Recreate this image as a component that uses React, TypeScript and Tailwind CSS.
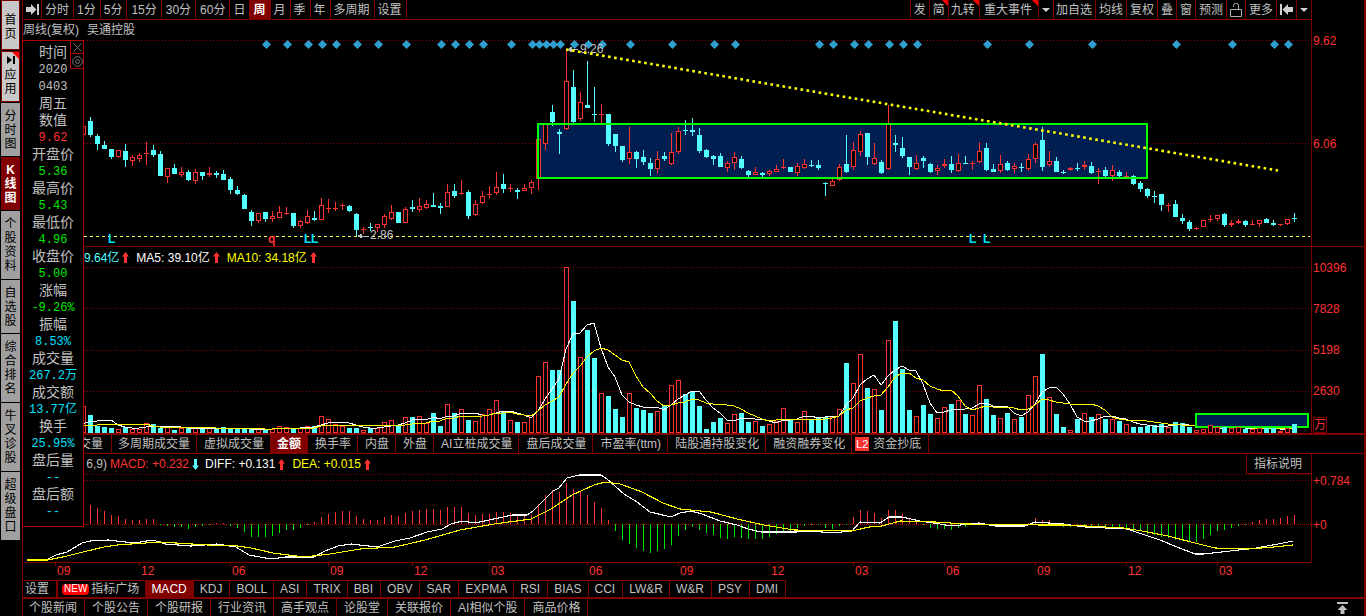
import type { ReactNode } from "react";

const RED = "#ff3232";
const CYAN = "#54ffff";
const MAROON = "#800000";

const STEP = 7;
const X0 = 83;

// Each entry: direction (r = up, c = down), high, body top, body bottom, low
const CANDLES = `r126,126,135,135 c117,121,135,137 c134,136,144,150 c141,145,149,149 c149,149,157,159 r150,150,157,158
c144,151,160,167 r155,157,161,166 r153,155,159,162 r142,153,154,165 c145,150,155,157 c151,154,176,176 r168,168,177,183
c164,168,174,174 r167,172,175,177 c170,172,180,181 r169,172,181,184 c172,172,176,180 r167,173,175,177 c171,173,175,178
c170,174,180,180 c177,179,190,194 c186,190,194,195 c194,195,209,209 c210,212,221,226 r213,213,221,223 c212,212,219,222
r211,216,219,222 r206,212,218,218 r207,213,214,215 c213,213,226,228 r220,221,226,228 r210,216,223,224 c211,218,220,221
r198,205,220,220 r199,208,209,213 r202,208,209,211 r203,205,206,210 c205,206,211,212 c213,214,230,236 r227,229,230,234
c223,227,228,231 r224,224,228,232 r214,216,225,228 r205,212,219,220 c212,212,223,223 r207,209,223,223 c200,207,209,212
r198,206,210,212 r200,204,208,209 c193,205,207,207 c203,206,208,214 r184,192,207,207 c184,191,196,198 r180,193,194,195
c190,192,216,219 r200,204,215,216 r191,196,203,204 r186,194,195,198 r172,187,193,195 c174,184,189,193 r184,188,189,192
c188,190,192,199 r184,188,191,191 r180,182,188,194 r139,139,179,190 r124,124,144,150 c105,112,122,126 c129,132,134,154
r50,81,129,130 c70,87,122,123 r92,102,119,121 c61,105,108,108 c87,114,115,122 r104,114,115,123 c114,114,144,146
c134,134,146,152 c146,146,160,162 r127,152,159,164 c151,152,159,168 c150,157,162,165 c158,163,169,176 r151,159,169,173
c152,156,159,161 r133,152,164,165 r127,131,152,154 c120,130,131,135 c118,130,132,136 c128,135,151,153 c149,150,157,158
c155,156,159,165 c153,156,167,167 r161,163,168,172 r152,157,163,170 c156,159,168,169 c170,171,175,177 r167,172,175,175
c172,173,175,177 r170,171,174,176 r165,169,172,172 r159,167,168,169 c167,167,172,172 r163,166,173,176 r159,164,168,169
c160,165,166,167 c160,165,168,170 c182,183,184,196 r179,181,186,186 r164,167,180,181 c135,164,172,173 r142,150,167,170
r131,134,152,156 c133,133,157,165 r143,158,164,165 c160,162,173,174 r105,124,169,170 c135,143,145,152 c137,148,156,158
c157,157,167,175 r155,163,169,170 c156,158,161,168 c163,164,172,173 r165,168,171,175 r159,164,166,168 c156,164,170,173
r154,163,171,172 c156,163,164,164 r161,163,164,170 r142,151,162,163 c143,148,170,171 c164,169,172,172 r155,164,171,173
c161,163,170,171 r163,166,169,173 c163,167,168,172 r154,159,169,171 r142,144,159,163 c127,140,167,171 r151,161,165,167
c157,161,172,172 c170,172,173,174 r167,168,170,171 c163,168,169,171 r161,165,167,170 c162,166,173,174 r168,171,172,184
c167,170,176,177 r165,170,176,181 c170,172,176,177 r172,176,177,178 c175,176,184,185 c181,183,189,192 c188,189,196,198
c191,196,197,203 c194,194,205,211 r203,205,206,212 c200,204,217,217 c214,218,221,224 c220,222,229,231 r227,228,229,230
r220,220,227,227 r215,219,220,222 r215,215,219,221 c213,214,225,227 r220,223,225,227 r219,221,223,224 c220,221,225,227
r220,224,225,225 r220,220,224,227 c218,219,223,223 c220,223,225,226 r224,224,225,226 r219,219,224,225 c213,218,219,222`
  .split(/\s+/)
  .map((s) => ({ up: s[0] === "r", v: s.slice(1).split(",").map(Number) }));

const VOL_BASE = 433;
const VOLUME = [
  406, 415, 426, 427, 428, 429, 427, 429, 429, 423, 424, 428, 427, 430, 428, 428, 428, 429, 427, 428, 427, 429, 429, 429,
  429, 429, 429, 429, 426, 427, 428, 428, 426, 426, 416, 419, 424, 426, 428, 428, 430, 428, 428, 422, 420, 426, 417, 417, 416,
  423, 413, 426, 404, 413, 409, 420, 421, 414, 409, 400, 412, 420, 422, 422, 415, 376, 362, 370, 370, 267, 301, 357, 330,
  358, 393, 396, 409, 417, 393, 408, 410, 413, 411, 406, 385, 380, 394, 391, 406, 429, 422, 418, 423, 414, 413, 422, 421,
  426, 424, 421, 408, 420, 422, 411, 419, 418, 417, 417, 409, 363, 383, 354, 388, 389, 410, 340, 321, 369, 410, 416, 405,
  414, 418, 407, 404, 400, 414, 415, 385, 399, 415, 418, 413, 419, 417, 395, 376, 354, 397, 414, 427, 430, 419, 413, 417,
  414, 419, 419, 421, 424, 427, 427, 426, 425, 424, 427, 422, 423, 427, 430, 429, 425, 427, 427, 428, 427, 429, 429, 428,
  428, 428, 431, 428, 424,
];
// The mark over the volume bars begins at this bar
const LATE = VOLUME.length - 14;
const EARLIER = [4, 4, 4, 4, 4, 5, 5, 5, 5];

function average(n: number) {
  const h = [...EARLIER, ...VOLUME.map((y) => VOL_BASE - y)];
  return VOLUME.map((_, i) => {
    const end = i + EARLIER.length + 1;
    const sum = h.slice(end - n, end).reduce((a, b) => a + b, 0);
    return `${X0 + STEP * i},${Math.round(VOL_BASE - sum / n)}`;
  }).join(" ");
}

const MACD_BARS = [
  505, 508, 511, 515, 516, 519, 520, 520, 519, 519, 525, 526, 527, 527, 529, 527, 526, 525, 523, 523, 526, 528, 532, 537,
  537, 537, 536, 533, 530, 530, 528, 525, 522, 517, 514, 512, 511, 511, 516, 519, 520, 520, 517, 515, 516, 513, 511, 510, 509,
  509, 510, 507, 507, 507, 513, 515, 514, 514, 512, 512, 513, 514, 515, 515, 504, 495, 490, 492, 483, 489, 491, 495, 502,
  508, 520, 531, 540, 544, 548, 551, 553, 551, 549, 545, 536, 530, 527, 530, 533, 535, 538, 539, 537, 538, 539, 539, 539,
  537, 534, 531, 531, 528, 526, 525, 525, 528, 529, 526, 525, 517, 510, 511, 513, 518, 510, 510, 514, 519, 521, 525, 528,
  529, 529, 530, 528, 527, 525, 522, 525, 526, 525, 526, 525, 525, 523, 518, 520, 520, 523, 527, 527, 526, 527, 527, 528,
  527, 528, 529, 529, 531, 531, 534, 535, 537, 538, 540, 541, 542, 542, 539, 535, 531, 530, 528, 526, 525, 522, 520, 519,
  519, 518, 516, 515,
];

const DIFF =
  "27,560 35,561 48,559 56,555 67,552 82,543 90,541 108,540 134,543 153,540 165,544 191,546 217,544 236,547 249,555 271,559 286,557 314,557 325,551 338,546 351,544 377,547 395,541 410,538 427,532 442,529 451,524 462,521 475,523 503,517 512,515 527,515 533,511 553,491 559,488 567,478 579,475 601,475 607,479 624,494 637,502 650,512 671,517 680,513 691,511 702,514 720,521 737,525 748,529 761,532 796,532 812,531 832,533 852,531 860,522 880,523 889,517 902,517 920,521 940,524 951,526 979,523 995,526 1025,526 1035,522 1063,524 1085,527 1127,529 1142,534 1160,540 1177,547 1195,554 1204,554 1230,551 1256,548 1278,544 1293,541";
const DEA =
  "27,560 48,560 67,556 87,551 104,547 117,545 160,542 208,545 238,546 251,548 273,553 304,557 330,554 360,549 395,547 425,540 460,530 494,524 531,519 551,509 572,495 594,485 605,482 620,484 642,492 663,503 680,509 711,512 737,519 764,525 794,530 852,531 869,527 882,526 900,521 935,522 966,524 1041,525 1067,525 1124,528 1142,531 1168,536 1195,543 1215,548 1248,549 1274,547 1293,545";

const DIAMONDS = [
  266, 287, 308, 322, 336, 357, 378, 406, 441, 455, 469, 483, 511, 532, 539, 546, 553, 560, 574, 588, 602, 630, 672, 714,
  735, 819, 833, 854, 868, 889, 903, 917, 987, 1029, 1092, 1176, 1232, 1274, 1288,
];

const MONTHS: [number, string][] = [
  [55, "09"], [139, "12"], [230, "06"], [328, "09"], [412, "12"], [489, "03"], [587, "06"], [678, "09"], [769, "12"],
  [853, "03"], [944, "06"], [1035, "09"], [1126, "12"], [1217, "03"],
];

const PERIODS = ["分时", "1分", "5分", "15分", "30分", "60分", "日", "周", "月", "季", "年", "多周期", "设置"];
const VOL_TABS = ["多周期成交量", "虚拟成交量", "金额", "换手率", "内盘", "外盘", "AI立桩成交量", "盘后成交量", "市盈率(ttm)", "陆股通持股变化", "融资融券变化"];
const INDICATORS = ["MACD", "KDJ", "BOLL", "ASI", "TRIX", "BBI", "OBV", "SAR", "EXPMA", "RSI", "BIAS", "CCI", "LW&R", "W&R", "PSY", "DMI"];
const NEWS = ["个股新闻", "个股公告", "个股研报", "行业资讯", "高手观点", "论股堂", "关联报价", "AI相似个股", "商品价格"];

const G = "text-[#00e600]";
const C = "text-[#00e0ff]";
const READOUT: [string, string][] = [
  ["开盘价", "5.36"], ["最高价", "5.43"], ["最低价", "4.96"], ["收盘价", "5.00"], ["涨幅", "-9.26%"],
  ["振幅", "8.53%"], ["成交量", "267.2万"], ["成交额", "13.77亿"], ["换手", "25.95%"], ["盘后量", "--"], ["盘后额", "--"],
];

function Dotted({ y }: { y: number }) {
  return <line x1={84} x2={1311} y1={y + 0.5} y2={y + 0.5} stroke="#900000" strokeDasharray="1 2" />;
}

function Bar({ i }: { i: number }) {
  const y = VOLUME[i];
  const x = X0 + STEP * i - 2;
  return CANDLES[i].up ? (
    <rect x={x + 0.5} y={y + 0.5} width={4} height={Math.max(1, VOL_BASE - y - 1)} fill="black" stroke={RED} />
  ) : (
    <rect x={x} y={y} width={5} height={VOL_BASE - y} fill={CYAN} />
  );
}

function PriceChart() {
  return (
    <svg viewBox="23 40 1288 206" preserveAspectRatio="none" className="block h-[206px] w-full" shapeRendering="crispEdges">
      <Dotted y={40} />
      <Dotted y={143} />
      <line x1={84} x2={1310} y1={236.5} y2={236.5} stroke="#ffff54" strokeDasharray="3 3" />
      <rect x={538} y={124} width={609} height={54} fill="#001e50" />
      {DIAMONDS.map((x) => (
        <path key={x} d={`M${x + 0.5} 40l4.5 4.5l-4.5 4.5l-4.5 -4.5z`} fill="#2f9fd0" shapeRendering="auto" />
      ))}
      {CANDLES.map(({ up, v: [high, top, bottom, low] }, i) => {
        const x = X0 + STEP * i;
        const color = up ? RED : CYAN;
        const hollow = up && bottom - top > 2;
        return (
          <g key={i}>
            <rect x={x} y={high} width={1} height={low - high} fill={color} />
            {hollow ? (
              <rect x={x - 1.5} y={top + 0.5} width={4} height={bottom - top - 1} fill="black" stroke={color} />
            ) : (
              <rect x={x - 2} y={top} width={5} height={bottom - top} fill={color} />
            )}
          </g>
        );
      })}
      <rect x={538} y={124} width={609} height={54} fill="none" stroke="#00ff00" strokeWidth={2} />
      <g fill="#c0c0c0" fontFamily="Liberation Sans, sans-serif" fontSize={12}>
        <path d="M567 49.5l5 -3v2.5h6v1h-6v2.5z" />
        <text x={580} y={53}>9.26</text>
        <path d="M357 236l5 -2.500v2h7v1h-7v2z" />
        <text x={370} y={239}>2.86</text>
      </g>
      <line
        x1={566}
        y1={49.5}
        x2={1278}
        y2={170.5}
        stroke="#ffff00"
        strokeWidth={2.600}
        strokeDasharray="2.6 3.5"
        shapeRendering="auto"
      />
      <g fill="#00e0ff" fontFamily="Liberation Sans, sans-serif" fontSize={12} fontWeight={700}>
        {[108, 304, 311, 969, 983].map((x) => (
          <text key={x} x={x} y={243}>L</text>
        ))}
        <text x={268} y={243} fill={RED}>q</text>
      </g>
    </svg>
  );
}

function VolumeChart() {
  return (
    <svg viewBox="23 266 1288 167" preserveAspectRatio="none" className="block h-[167px] w-full" shapeRendering="crispEdges">
      {[267, 308, 350, 391].map((y) => (
        <Dotted key={y} y={y} />
      ))}
      {VOLUME.slice(0, LATE + 1).map((_, i) => (
        <Bar key={i} i={i} />
      ))}
      <g fill="none">
        <polyline points={average(5)} stroke="white" />
        <polyline points={average(10)} stroke="#ffff00" />
      </g>
      <rect x={1196} y={414} width={112} height={13} fill="#001e50" stroke="#00ff00" strokeWidth={2} />
      {VOLUME.slice(LATE + 1).map((_, i) => (
        <Bar key={i} i={i + LATE + 1} />
      ))}
    </svg>
  );
}

function MacdChart() {
  return (
    <svg viewBox="23 474 1288 88" preserveAspectRatio="none" className="block h-[88px] w-full" shapeRendering="crispEdges">
      <Dotted y={474} />
      <Dotted y={480} />
      <line x1={84} x2={1311} y1={524.5} y2={524.5} stroke="#b00000" strokeDasharray="1 1" />
      {MACD_BARS.map((y, i) => (
        <rect
          key={i}
          x={90 + STEP * i}
          y={Math.min(y, 524)}
          width={1}
          height={Math.max(1, Math.abs(524 - y))}
          fill={y < 524 ? RED : "#00e600"}
        />
      ))}
      <g fill="none">
        <polyline points={DIFF} stroke="white" strokeWidth={1.100} />
        <polyline points={DEA} stroke="#ffff00" strokeWidth={1.100} />
      </g>
    </svg>
  );
}

function MonthAxis() {
  return (
    <svg viewBox="23 562 1288 18" preserveAspectRatio="none" className="block h-[18px] w-full">
      <rect x={23} y={562} width={1288} height={1} fill={MAROON} />
      {MONTHS.map(([x, label]) => (
        <g key={x}>
          <rect x={x} y={562} width={1} height={4} fill={MAROON} />
          <text x={x + 2} y={575} fill={RED} fontSize={12} fontFamily="Liberation Sans, sans-serif">{label}</text>
        </g>
      ))}
    </svg>
  );
}

function Trend({ down = false }: { down?: boolean }) {
  return (
    <svg viewBox="0 0 7 11" className={down ? "ml-[3px] mr-1.5 h-[11px] w-[7px] rotate-180" : "ml-[3px] mr-[7px] h-[11px] w-[7px]"} aria-hidden="true">
      <path d="M3.5 0L7 4.500H5V11H2V4.500H0z" fill={down ? CYAN : RED} />
    </svg>
  );
}

function Tool({ children, flag = false, pad = "px-[3px]" }: { children: ReactNode; flag?: boolean; pad?: string }) {
  return (
    <button type="button" className={`relative flex h-full items-center border-l border-[#800000] ${pad}`}>
      {children}
      {flag && <span className="absolute right-0 top-0 size-1.5 bg-[#ff0000] [clip-path:polygon(0_0,100%_0,100%_100%)]" />}
    </button>
  );
}

function Caret() {
  return (
    <svg viewBox="0 0 8 4" className="h-1 w-2" aria-hidden="true">
      <path d="M0 0h8l-4 4z" fill="#d0d0d0" />
    </svg>
  );
}

function StepArrow({ flip = false }: { flip?: boolean }) {
  return (
    <svg viewBox="0 0 13 11" className={flip ? "h-[11px] w-[13px] rotate-180" : "h-[11px] w-[13px]"} aria-hidden="true">
      <path d="M0 3h5V0l5.500 5.500L5 11V8H0zM11 0h2v11h-2z" fill="#d0d0d0" />
    </svg>
  );
}

function SideTab({ label, tone, children }: { label: string; tone: string; children?: ReactNode }) {
  return (
    <button type="button" className={`relative flex w-full flex-col items-center justify-center ${tone}`}>
      {children}
      <span className="w-3 break-all text-center leading-[14px]">{label}</span>
    </button>
  );
}

const AXIS = "w-[52px] shrink-0 pl-px text-[#ff3232]";
const PLOT = "min-w-0 flex-1 border-r border-[#800000]";
const VALUE = "h-[17px] whitespace-nowrap font-['Liberation_Mono','Noto_Sans_CJK_SC',monospace] text-[12px] leading-[19px]";

export default function App() {
  return (
    <div className="bg-white pr-1 font-['Liberation_Sans','Noto_Sans_CJK_SC',sans-serif] text-[12px] leading-4 text-[#c0c0c0]">
      <div className="flex overflow-hidden border-r-2 border-[#800000] bg-black">
        <nav className="flex w-[22px] shrink-0 flex-col gap-px pl-px pr-0.5 text-black">
          <SideTab label="首页" tone="h-[50px] border border-[#800000] bg-[#c8c8c8] pt-1" />
          <SideTab label="应用" tone="h-[51px] border border-[#800000] bg-[#c8c8c8] pb-0.5">
            <svg viewBox="0 0 8 8" className="mb-1 h-2 w-2" aria-hidden="true">
              <path d="M0 0l5 4l-5 4zM6 0h2v8H6z" fill="black" />
            </svg>
            <span className="absolute right-0 top-0 size-[7px] bg-[#ff0000] [clip-path:polygon(0_0,100%_0,100%_100%)]" />
          </SideTab>
          <SideTab label="分时图" tone="h-[53px] bg-[#a0a0a0]" />
          <SideTab label="K线图" tone="h-[53px] bg-[#800000] font-bold text-white" />
          <SideTab label="个股资料" tone="h-[68px] bg-[#a0a0a0]" />
          <SideTab label="自选股" tone="h-[53px] bg-[#a0a0a0]" />
          <SideTab label="综合排名" tone="h-[68px] bg-[#a0a0a0]" />
          <SideTab label="牛叉诊股" tone="h-[68px] bg-[#a0a0a0]" />
          <SideTab label="超级盘口" tone="h-[68px] bg-[#a0a0a0]" />
        </nav>

        <main className="relative min-w-0 flex-1 border-l border-[#800000]">
          <section className="flex border-b border-[#800000]">
            <div className={PLOT}>
              <div className="flex h-5 justify-between border-b border-[#800000]">
                <div className="flex">
                  <button type="button" aria-label="下一步" className="flex w-[18px] items-center justify-center">
                    <StepArrow />
                  </button>
                  {PERIODS.map((p) => (
                    <button
                      key={p}
                      type="button"
                      className={
                        p === "周"
                          ? "border-l border-[#800000] bg-[#800000] pl-[3px] pr-1 font-bold text-white"
                          : p.length === 3 && p !== "多周期"
                            ? "border-l border-[#800000] px-1"
                            : "border-l border-[#800000] pl-[3px] pr-1"
                      }
                    >
                      {p}
                    </button>
                  ))}
                  <span className="border-l border-[#800000]" />
                </div>
                <div className="flex">
                  <Tool>发</Tool>
                  <Tool flag>简</Tool>
                  <Tool flag pad="pl-0.5 pr-1">九转</Tool>
                  <Tool flag pad="pl-1 pr-1.5">重大事件</Tool>
                  <Tool><Caret /></Tool>
                  <Tool pad="pl-0.5 pr-[3px]">加自选</Tool>
                  <Tool>均线</Tool>
                  <Tool>复权</Tool>
                  <Tool>叠</Tool>
                  <Tool>窗</Tool>
                  <Tool>预测</Tool>
                  <Tool>
                    <svg viewBox="0 0 12 14" className="h-3.5 w-3" fill="none" stroke="#b0b0b0" aria-hidden="true">
                      <path d="M0.500 6.500h11v7h-11zM3.500 4V2.500q0 -2 2 -2h1q2 0 2 2V6.500" />
                    </svg>
                  </Tool>
                  <Tool>更多</Tool>
                  <Tool><StepArrow flip /></Tool>
                  <Tool><Caret /></Tool>
                </div>
              </div>
              <div className="flex h-5 items-center gap-2">
                <span>周线(复权)</span>
                <span>吴通控股</span>
              </div>
              <PriceChart />
            </div>
            <div className={`${AXIS} flex flex-col gap-[87px] pt-[33px]`}>
              <span>9.62</span>
              <span>6.06</span>
            </div>
          </section>

          <section className="flex border-b-2 border-[#800000]">
            <div className={PLOT}>
              <div className="flex h-[19px] items-center pl-[61px] pt-0.5">
                <span className="text-[#54ffff]">9.64亿</span>
                <Trend />
                <span className="text-white">MA5: 39.10亿</span>
                <Trend />
                <span className="text-[#ffff00]">MA10: 34.18亿</span>
                <Trend />
              </div>
              <VolumeChart />
            </div>
            <div className={`${AXIS} flex flex-col items-start pt-[13px]`}>
              <div className="flex flex-col gap-[25px]">
                <span>10396</span>
                <span>7828</span>
                <span>5198</span>
                <span>2630</span>
              </div>
              <span className="mt-auto border border-[#800000] leading-[14px]">万</span>
            </div>
          </section>

          <div className="flex h-[19px] items-stretch border-b border-[#800000]">
            <button type="button" className="w-[89px] border-r border-[#800000] pr-2 text-right">交量</button>
            {VOL_TABS.map((t) => (
              <button
                key={t}
                type="button"
                className={
                  t === "金额"
                    ? "border-r border-[#800000] bg-[#800000] px-1.5 font-bold text-white"
                    : t === "多周期成交量"
                      ? "border-r border-[#800000] px-1.5"
                      : "border-r border-[#800000] pl-[7px] pr-1.5"
                }
              >
                {t}
              </button>
            ))}
            <button type="button" className="flex items-center gap-1 border-r border-[#800000] pl-[3px] pr-[7px]">
              <span className="w-3.5 bg-[#ff3232] text-center text-[11px] leading-[14px] text-white">L2</span>
              资金抄底
            </button>
          </div>

          <section className="flex">
            <div className="min-w-0 flex-1">
              <div className={PLOT}>
                <div className="flex h-5 items-center justify-between pl-8">
                  <div className="flex items-center">
                    <span className="mr-[3px] w-[52px] text-right">6,9)</span>
                    <span className="text-[#ff3232]">MACD: +0.232</span>
                    <Trend down />
                    <span className="text-white">DIFF: +0.131</span>
                    <Trend />
                    <span className="text-[#ffff00]">DEA: +0.015</span>
                    <Trend />
                  </div>
                  <button type="button" className="h-5 border-b border-l border-[#800000] pl-[7px] pr-[9px]">指标说明</button>
                </div>
                <MacdChart />
              </div>
              <div className="pr-px">
                <MonthAxis />
              </div>
            </div>
            <div className={`${AXIS} flex flex-col gap-7 pt-[19px]`}>
              <span>+0.784</span>
              <span>+0</span>
            </div>
          </section>

          <div className="border-b-2 border-[#800000]">
            <div className="flex h-[17px] w-fit border-t border-[#800000]">
              <button type="button" className="border-r-2 border-[#800000] pl-0.5 pr-[7px]">设置</button>
              <button type="button" className="flex items-center gap-0.5 pl-1 pr-1.5">
                <span className="flex h-[11px] items-center rounded-sm bg-[#ff0000] px-0.5 text-[10px] text-white">NEW</span>
                指标广场
              </button>
              {INDICATORS.map((t) => (
                <button
                  key={t}
                  type="button"
                  className={
                    t === "MACD"
                      ? "border-r border-[#800000] bg-[#800000] px-1.5 text-white"
                      : t.length < 4
                        ? "border-r border-[#800000] pl-1.5 pr-[7px]"
                        : "border-r border-[#800000] px-1.5"
                  }
                >
                  {t}
                </button>
              ))}
            </div>
          </div>

          <div className="flex h-[17px] items-center justify-between pr-4">
            <div className="flex">
              {NEWS.map((t) => (
                <button key={t} type="button" className="h-[17px] border-r border-[#800000] px-[7px] first:pl-1.5">{t}</button>
              ))}
            </div>
            <button type="button" aria-label="回到顶部">
              <svg viewBox="0 0 11 12" className="h-3 w-[11px]" aria-hidden="true">
                <path d="M0 0h11v2H0zM5.500 3l5 5h-3v4h-4V8h-3z" fill="#c0c0c0" />
              </svg>
            </button>
          </div>

          <aside className="absolute -left-px top-10 w-[62px] border border-[#b00000] bg-black pb-1.5 pt-[3px] text-center text-[14px] leading-[17px]">
            <div className="absolute right-0 top-0 flex flex-col border-l border-[#b00000] text-[#707070]">
              <button type="button" aria-label="关闭" className="flex h-[13px] w-3 items-center justify-center border-b border-[#b00000]">
                <svg viewBox="0 0 9 9" className="size-[9px]" stroke="currentColor" aria-hidden="true">
                  <path d="M0.500 0.500l8 8M8.500 0.500l-8 8" />
                </svg>
              </button>
              <button type="button" aria-label="选项" className="flex h-[15px] w-3 items-center justify-center border-b border-[#b00000]">
                <svg viewBox="0 0 11 11" className="size-[11px]" fill="none" stroke="currentColor" aria-hidden="true">
                  <path d="M3.500 0.800h4l1 1.700l1.700 1v4l-1.700 1l-1 1.700h-4l-1 -1.700l-1.700 -1v-4l1.700 -1z" />
                  <circle cx={5.5} cy={5.5} r={2} />
                </svg>
              </button>
            </div>
            <div className="h-[17px]">时间</div>
            <div className={VALUE}>2020</div>
            <div className={VALUE}>0403</div>
            <div className="h-[17px]">周五</div>
            <dl>
              <dt className="h-[17px]">数值</dt>
              <dd className={`${VALUE} text-[#ff3232]`}>9.62</dd>
              {READOUT.map(([name, value], i) => (
                <div key={name}>
                  <dt className="h-[17px]">{name}</dt>
                  <dd className={`${VALUE} ${i < 5 ? G : C}`}>{value}</dd>
                </div>
              ))}
            </dl>
          </aside>
        </main>
      </div>
    </div>
  );
}
